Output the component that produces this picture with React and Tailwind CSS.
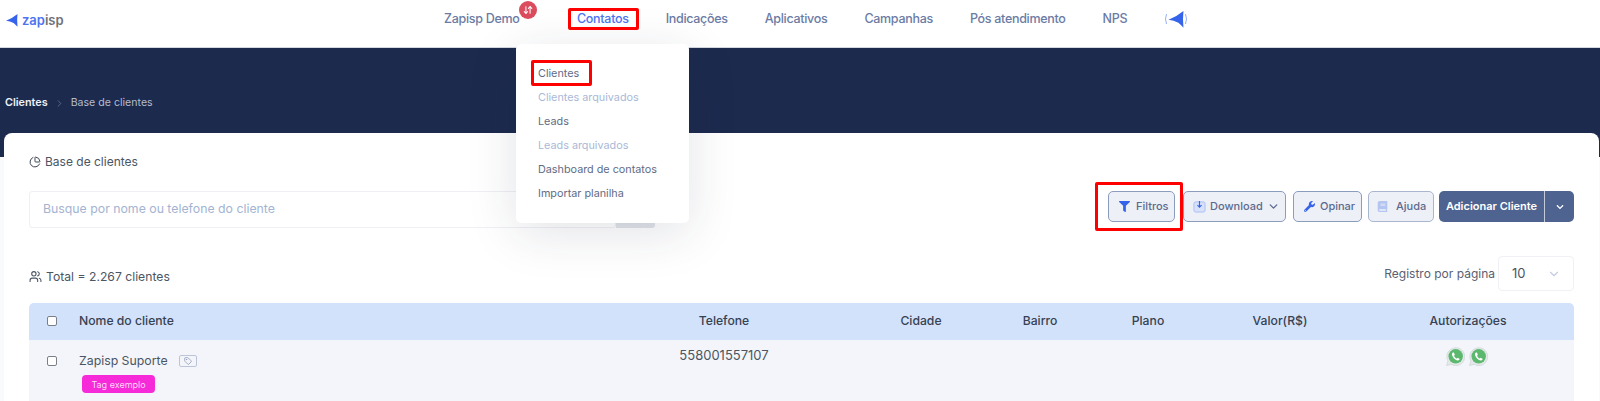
import React from "react";
import { PieChart, Users, Tag, ChevronDown, ChevronRight, ArrowDownUp } from "lucide-react";
import { FaFilter, FaWrench, FaBook, FaChevronDown } from "react-icons/fa";

const PLANE = "M0 6.8 Q6 4.5 11.5 0 Q10.8 6 11.5 12.8 Q9.5 10.5 7.6 9 Q4 7.4 0 6.8 Z";
const Plane = ({ className }) => (
  <svg viewBox="0 0 12 13" className={className}><path d={PLANE} fill="#3563e9" /></svg>
);

const Wa = () => (
  <svg viewBox="0 0 20 20" className="w-[19px] h-[19px]">
    <path d="M0.6 19.6 L2 14.6 A9.4 9.4 0 1 1 5.4 18.2 Z" fill="#e3e9e9" stroke="#c6cfd0" strokeWidth="0.6" />
    <circle cx="10.2" cy="9.8" r="7.6" fill="#5cb86f" />
    <path d="M7.2 5.8 C6 6.8 6 8.4 7.3 10.4 C8.7 12.6 10.8 14.1 12.6 14.1 C13.5 14.1 14.3 13.4 14.4 12.7 L12.4 11.4 L11.3 12.2 C10.2 11.6 9 10.4 8.5 9.1 L9.3 8.1 L8.3 5.8 Z" fill="#fff" />
  </svg>
);

const Btn = ({ icon, children, className = "", extra }) => (
  <div className={"h-[31px] shrink-0 flex items-center rounded-[5px] border border-[#8c9cbd] bg-[#eef0f8] text-[#5b6b8f] text-[11px] font-medium " + className}>
    {icon}
    <span>{children}</span>
    {extra}
  </div>
);

const nav = ["Indicações", "Aplicativos", "Campanhas", "Pós atendimento", "NPS"];
const menu = [
  ["Clientes", "text-[#5f6b85]"],
  ["Clientes arquivados", "text-[#a9b9d8]"],
  ["Leads", "text-[#5f6b85]"],
  ["Leads arquivados", "text-[#a9b9d8]"],
  ["Dashboard de contatos", "text-[#5f6b85]"],
  ["Importar planilha", "text-[#5f6b85]"],
];
const gridCols = "grid grid-cols-[559px_272px_122px_116px_100px_164px_212px]";

export default function App() {
  return (
    <div className="relative w-[1600px] h-[401px] overflow-hidden bg-[#f9fafb] font-['Inter','Liberation_Sans',sans-serif] text-[12px]">
      {/* header */}
      <header className="h-[48px] bg-white border-b border-[#d5d8e0] flex items-center relative">
        <div className="flex items-center pl-[6px] w-[444px] -mt-[7px]">
          <Plane className="w-[12px] h-[13px]" />
          <span className="ml-[4px] text-[13px] font-semibold leading-none"><span className="text-[#4d74f0]">zap</span><span className="text-[#6f7277]">isp</span></span>
        </div>
        <nav className="flex items-center gap-[37px] text-[#6b7ba4] font-medium text-[12.5px] tracking-[-0.3px] -mt-[9px] whitespace-nowrap">
          <span className="relative w-[76px]">Zapisp Demo
            <span className="absolute -top-[9px] -right-[17px] w-[18px] h-[18px] rounded-full bg-[#dc4c5f] flex items-center justify-center text-white">
              <ArrowDownUp size={10} strokeWidth={2.5} />
            </span>
          </span>
          <span className="text-[#4d74f0] ml-[20px]">Contatos</span>
          {nav.map((n) => <span key={n}>{n}</span>)}
          <svg viewBox="0 0 24 18" className="w-[24px] h-[18px]" fill="none">
            <path d={PLANE} transform="translate(4.5 1) scale(1.3)" fill="#3563e9" />
            <path d="M2.5 4 Q0.5 9 2.5 14" stroke="#8aa5f5" strokeWidth="0.9" />
            <path d="M21.5 4 Q23.5 9 21.5 14" stroke="#8aa5f5" strokeWidth="0.9" />
          </svg>
        </nav>
      </header>

      {/* navy band */}
      <div className="h-[109px] bg-[#1c2a4e] pt-[48px] pl-[5px] flex items-start gap-[6px] text-[10.8px] leading-[14px]">
        <span className="text-[#eef1f8] font-semibold">Clientes</span>
        <ChevronRight size={11} className="text-[#5c6a8c] mt-[2px]" />
        <span className="text-[#b4bccd] text-[10.6px]">Base de clientes</span>
      </div>

      {/* card */}
      <main className="relative ml-[4px] mr-[1px] -mt-[24px] h-[268px] bg-white rounded-t-[8px] pl-[25px] pr-[25px] pt-[22px]">
        <div className="flex items-center gap-[4px] h-[14px] text-[#4b5563] text-[12px]">
          <PieChart size={12} className="text-[#3f4654]" />
          <span>Base de clientes</span>
        </div>
        <div className="flex items-start mt-[22px]">
          <div className="w-[587px] h-[37px] rounded-[3px] border border-[#eef0f4] flex items-center pl-[13px] text-[#a3b4d2] text-[12.3px]">
            Busque por nome ou telefone do cliente
          </div>
          <div className="w-[39px] h-[37px] bg-[#e1e3e8] rounded-r-[3px]" />
          <div className="ml-[453px] flex items-center">
            <Btn className="w-[67px] pl-[10px]" icon={<FaFilter size={11} className="text-[#3563e9] mr-[6px]" />}>Filtros</Btn>
            <Btn className="w-[103px] ml-[8px] pl-[9px]" icon={
              <svg viewBox="0 0 14 14" className="w-[13px] h-[13px] mr-[4px]"><rect x="1" y="2" width="12" height="11" rx="2" fill="#d7e1fa" stroke="#a9bdf2" /><path d="M7 1 V7.5 M4.8 5.6 L7 7.8 L9.2 5.6" stroke="#3563e9" fill="none" strokeWidth="1.2" /></svg>
            } extra={<ChevronDown size={13} strokeWidth={2.5} className="ml-[4px] text-[#5b6b8f]" />}>Download</Btn>
            <Btn className="w-[69px] ml-[7px] pl-[10px]" icon={<FaWrench size={11} className="text-[#3563e9] mr-[5px]" />}>Opinar</Btn>
            <Btn className="w-[66px] ml-[6px] pl-[8px] border-[#a9b6d0]" icon={<FaBook size={11} className="text-[#b4c5f2] mr-[8px]" />}>Ajuda</Btn>
            <div className="ml-[5px] h-[31px] w-[135px] flex rounded-[5px] bg-[#4e6390] text-white text-[11px] font-semibold overflow-hidden">
              <span className="w-[106px] flex items-center justify-center border-r border-[#c3cbdb]">Adicionar Cliente</span>
              <span className="flex-1 flex items-center justify-center"><FaChevronDown size={8} /></span>
            </div>
          </div>
        </div>
        <div className="flex items-center justify-between mt-[28px] h-[35px]">
          <div className="flex items-center gap-[4px] text-[#4b5563] text-[12.2px] mt-[7px]">
            <Users size={13} />
            <span>Total = 2.267 clientes</span>
          </div>
          <div className="flex items-center text-[#5a6070] text-[12px]">
            <span>Registro por página</span>
            <div className="ml-[3px] w-[76px] h-[35px] rounded-[4px] border border-[#f0f1f5] flex items-center justify-between pl-[13px] pr-[12px] text-[#4b5563] text-[13px]">
              <span>10</span>
              <ChevronDown size={14} className="text-[#c3cde0]" />
            </div>
          </div>
        </div>
        <div className="mt-[12px] rounded-t-[5px] overflow-hidden">
          <div className={gridCols + " h-[37px] items-center bg-[#d2e2fb] text-[#374151] font-medium text-[12.2px] text-center"}>
            <div className="flex items-center pl-[18px]">
              <span className="w-[10px] h-[10px] rounded-[2px] border border-[#7b7f87] bg-white" />
              <span className="ml-[22px]">Nome do cliente</span>
            </div>
            <div>Telefone</div><div>Cidade</div><div>Bairro</div><div>Plano</div><div>Valor(R$)</div><div>Autorizações</div>
          </div>
          <div className={gridCols + " h-[61px] bg-[#f3f5fa] text-[#4b5563] text-[12.3px] text-center"}>
            <div className="pl-[18px] text-left">
              <div className="flex items-center mt-[12px]">
                <span className="w-[10px] h-[10px] rounded-[2px] border border-[#7b7f87] bg-white" />
                <span className="ml-[22px]">Zapisp Suporte</span>
                <span className="ml-[11px] w-[18px] h-[12px] rounded-[2px] border border-[#bcc5d8] flex items-center justify-center"><Tag size={8} className="text-[#7d8cab]" /></span>
              </div>
              <span className="ml-[35px] mt-[5px] w-[73px] h-[18px] rounded-[4px] bg-[#f62ad9] text-[#ffd9f6] text-[9px] flex items-center justify-center">Tag exemplo</span>
            </div>
            <div className="pt-[6px] text-[13px]">558001557107</div>
            <div /><div /><div /><div />
            <div className="flex justify-center gap-[4px] pt-[7px] pr-[3px]"><Wa /><Wa /></div>
          </div>
        </div>
      </main>

      {/* dropdown */}
      <div className="absolute left-[516px] top-[44px] w-[173px] h-[179px] bg-white rounded-[5px] shadow-[0_10px_50px_rgba(30,40,70,0.13)] pt-[18px] pl-[22px] text-[10.8px]">
        {menu.map(([t, c]) => <div key={t} className={"h-[24px] leading-[24px] " + c}>{t}</div>)}
      </div>

      {/* highlight frames */}
      <div className="absolute left-[568px] top-[8px] w-[71px] h-[22px] border-[3px] border-[#fe0000] rounded-[2px]" />
      <div className="absolute left-[531px] top-[60px] w-[61px] h-[26px] border-[3px] border-[#fe0000] rounded-[2px]" />
      <div className="absolute left-[1095px] top-[182px] w-[88px] h-[49px] border-[3px] border-[#fe0000] rounded-[2px]" />
    </div>
  );
}
